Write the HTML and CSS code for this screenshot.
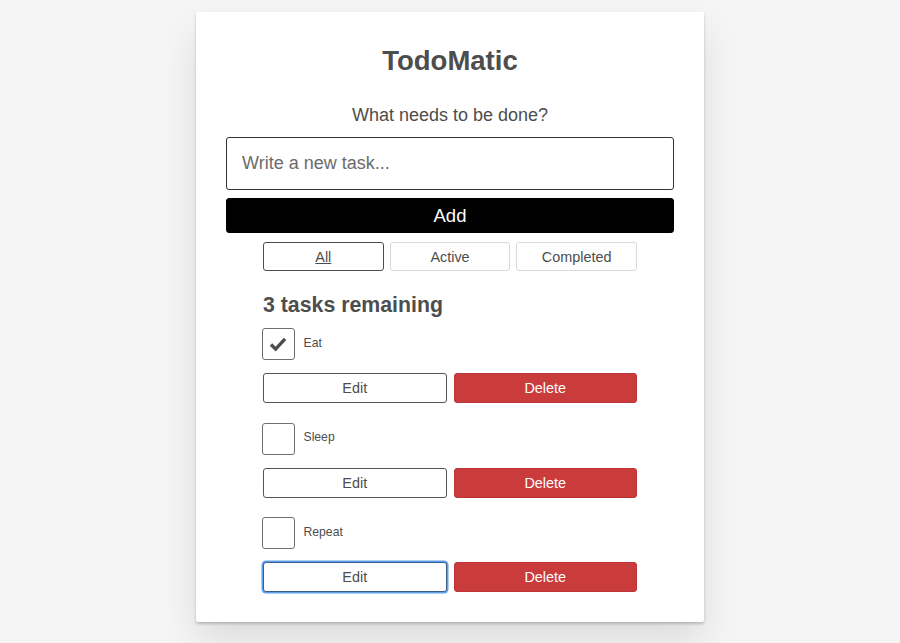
FILE: index.html
```html
<!DOCTYPE html>
<html lang="en">
<head>
<meta charset="utf-8">
<title>TodoMatic</title>
<link rel="stylesheet" href="styles.css">
</head>
<body>
<div class="todoapp">
  <h1 class="title">TodoMatic</h1>
  <form class="new-form">
    <label class="prompt" for="new-todo">What needs to be done?</label>
    <input id="new-todo" class="task-input" type="text" placeholder="Write a new task...">
    <button type="button" class="btn-add">Add</button>
  </form>
  <div class="filters">
    <button type="button" class="filter-btn pressed"><span class="under">All</span></button>
    <button type="button" class="filter-btn">Active</button>
    <button type="button" class="filter-btn">Completed</button>
  </div>
  <h2 class="remaining">3 tasks remaining</h2>
  <ul class="todo-list">
    <li class="todo">
      <div class="cb-row">
        <span class="cb checked">
          <svg class="tick" viewBox="0 0 32 32" width="30" height="30"><path d="M8.5 16.5 L13.5 21.5 L23.5 10.5" fill="none" stroke="#4d4d4d" stroke-width="3.6" stroke-linecap="butt" stroke-linejoin="miter"/></svg>
        </span>
        <span class="cb-label">Eat</span>
      </div>
      <div class="btn-group">
        <button type="button" class="btn">Edit</button>
        <button type="button" class="btn btn-danger">Delete</button>
      </div>
    </li>
    <li class="todo">
      <div class="cb-row">
        <span class="cb"></span>
        <span class="cb-label">Sleep</span>
      </div>
      <div class="btn-group">
        <button type="button" class="btn">Edit</button>
        <button type="button" class="btn btn-danger">Delete</button>
      </div>
    </li>
    <li class="todo">
      <div class="cb-row">
        <span class="cb"></span>
        <span class="cb-label">Repeat</span>
      </div>
      <div class="btn-group">
        <button type="button" class="btn focused">Edit</button>
        <button type="button" class="btn btn-danger">Delete</button>
      </div>
    </li>
  </ul>
</div>
</body>
</html>
```
FILE: styles.css
```css
* { box-sizing: border-box; }
html, body { margin: 0; padding: 0; }
body {
  background: #f5f5f5;
  color: #4d4d4d;
  font-family: "Liberation Sans", Arial, sans-serif;
  font-size: 12px;
  line-height: 1.25;
}
.todoapp {
  width: 508px;
  margin: 12px auto 21px;
  background: #fff;
  border-radius: 2px;
  padding: 32px 30px 30px;
  box-shadow: 0 2px 3px 0 rgba(0,0,0,.2), 0 19px 38px 0 rgba(0,0,0,.1);
}
.title {
  margin: 0;
  text-align: center;
  font-size: 27.5px;
  line-height: 34px;
  font-weight: bold;
}
.new-form {
  display: flex;
  flex-direction: column;
  margin: 0;
}
.prompt {
  display: block;
  text-align: center;
  font-size: 18px;
  line-height: 22px;
  margin: 26px 0 11px;
}
.task-input {
  height: 53px;
  width: 100%;
  border: 1.5px solid #333;
  border-radius: 3px;
  padding: 0 15px;
  font-family: inherit;
  font-size: 18px;
  color: #4d4d4d;
  outline: none;
}
.task-input::placeholder { color: #6b6b6b; }
.btn-add {
  margin-top: 8px;
  height: 35px;
  background: #000;
  color: #fff;
  border: 1px solid #000;
  border-radius: 3px;
  font-family: inherit;
  font-size: 18.5px;
  padding: 0;
}
.filters {
  width: 374px;
  margin: 9px auto 0;
  display: grid;
  grid-template-columns: 1fr 1fr 1fr;
  gap: 6px;
}
.filter-btn {
  height: 29px;
  background: #fff;
  border: 1px solid #d9d9d9;
  border-radius: 3px;
  font-family: inherit;
  font-size: 14.4px;
  color: #4d4d4d;
  padding: 0;
}
.filter-btn.pressed { border-color: #4d4d4d; }
.under { text-decoration: underline; }
.remaining {
  width: 374px;
  margin: 21px auto 0;
  font-size: 21.3px;
  line-height: 26px;
  font-weight: bold;
}
.todo-list {
  list-style: none;
  width: 374px;
  margin: 10px auto 0;
  padding: 0;
  display: flex;
  flex-direction: column;
  gap: 19.5px;
}
.cb-row {
  display: flex;
  align-items: center;
  gap: 9px;
  margin-left: -1.5px;
}
.cb {
  width: 33px;
  height: 32px;
  border: 1.5px solid #6f6f6f;
  border-radius: 3px;
  display: flex;
  align-items: center;
  justify-content: center;
}
.tick { display: block; }
.cb-label {
  font-size: 12.2px;
  line-height: 15px;
  margin-top: -2px;
}
.btn-group {
  margin-top: 13px;
  display: grid;
  grid-template-columns: 1fr 1fr;
  gap: 7px;
}
.btn {
  height: 30px;
  background: #fff;
  border: 1px solid #555;
  border-radius: 3px;
  font-family: inherit;
  font-size: 14.4px;
  color: #4d4d4d;
  padding: 0;
}
.btn-danger {
  background: #ca3c3c;
  border-color: #bd3535;
  color: #fff;
}
.btn.focused {
  border-color: #3c5f8a;
  box-shadow: 0 0 0 1.5px #5fa0ec;
}
```
